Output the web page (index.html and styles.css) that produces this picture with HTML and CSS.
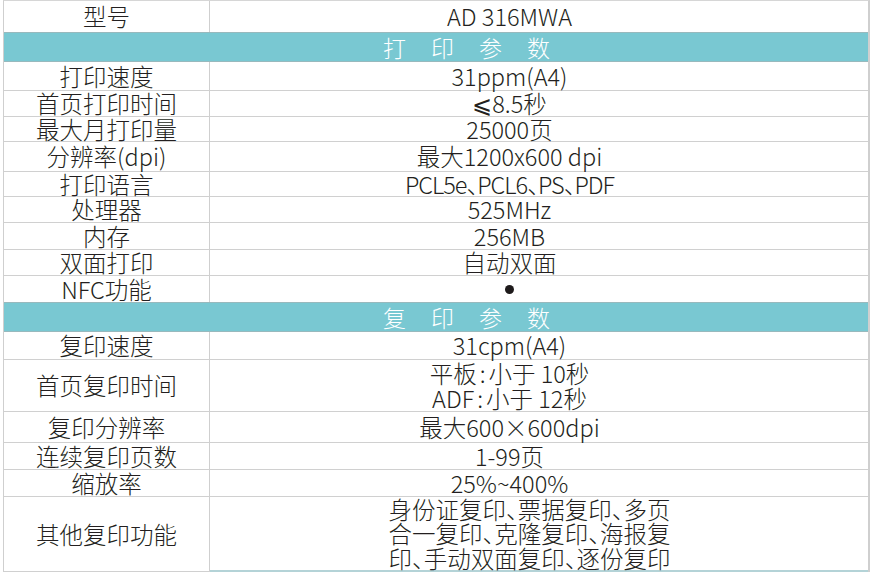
FILE: index.html
```html
<!DOCTYPE html>
<html lang="zh-CN">
<head>
<meta charset="utf-8">
<title>AD 316MWA 参数</title>
<link rel="stylesheet" href="styles.css">
</head>
<body>
<div class="spec">
  <div class="k">型号</div><div class="v">AD 316MWA</div>
  <div class="sec">打印参数</div>
  <div class="k">打印速度</div><div class="v">31ppm(A4)</div>
  <div class="k">首页打印时间</div><div class="v">⩽8.5秒</div>
  <div class="k">最大月打印量</div><div class="v">25000页</div>
  <div class="k">分辨率(dpi)</div><div class="v">最大1200x600 dpi</div>
  <div class="k">打印语言</div><div class="v tight">PCL5e、PCL6、PS、PDF</div>
  <div class="k">处理器</div><div class="v">525MHz</div>
  <div class="k">内存</div><div class="v">256MB</div>
  <div class="k">双面打印</div><div class="v">自动双面</div>
  <div class="k">NFC功能</div><div class="v"><span class="dot"></span></div>
  <div class="sec">复印参数</div>
  <div class="k">复印速度</div><div class="v">31cpm(A4)</div>
  <div class="k">首页复印时间</div><div class="v"><p class="lines">平板<span class="colon">:</span>小于 10秒<br>ADF<span class="colon">:</span>小于 12秒</p></div>
  <div class="k">复印分辨率</div><div class="v">最大600×600dpi</div>
  <div class="k">连续复印页数</div><div class="v">1-99页</div>
  <div class="k">缩放率</div><div class="v">25%~400%</div>
  <div class="k">其他复印功能</div><div class="v wide"><p class="lines">身份证复印、票据复印、多页<br>合一复印、克隆复印、海报复<br>印、手动双面复印、逐份复印</p></div>
</div>
</body>
</html>
```

FILE: styles.css
```css
html, body {
  margin: 0;
  padding: 0;
  background: #ffffff;
}

body {
  padding: 1px 0 0 3px;
  font-family: "Noto Sans CJK SC", "Noto Sans", sans-serif;
  font-weight: 300;
  color: #231f20;
}

.spec {
  width: 867px;
  display: grid;
  grid-template-columns: 206px 1fr;
  grid-template-rows: 32px 29px 29px 26px 25px 30px 25px 26px 27px 26px 27px 29px 28px 52px 31px 27px 27px 75px;
  border-top: 1px solid #d6d6d6;
  border-left: 1px solid #cfcfcf;
  border-right: 2px solid #cfcfcf;
  box-sizing: border-box;
  margin-top: -1px;
}

.k, .v {
  box-sizing: border-box;
  display: flex;
  align-items: center;
  justify-content: center;
  text-align: center;
  font-size: 23.5px;
  line-height: 24.5px;
  border-bottom: 1px solid #d0d0d0;
  white-space: nowrap;
  font-feature-settings: "halt" 1;
}

.k {
  border-right: 1px solid #cfcfcf;
}

.v {
  padding-right: 59px;
}

.v.wide {
  padding-right: 19px;
}

.lines {
  margin: 0;
  text-align: center;
}

.tight {
  letter-spacing: -1px;
}

.colon {
  margin: 0 3px;
}

.sec {
  grid-column: 1 / -1;
  box-sizing: border-box;
  display: flex;
  align-items: center;
  background: #79c8d2;
  color: #ffffff;
  font-size: 23px;
  letter-spacing: 25px;
  padding-left: 379px;
  border-top: 1px solid #98b9bd;
  border-bottom: 1px solid #98b9bd;
  margin-top: -1px;
}

.spec > .k:last-of-type,
.spec > .v:last-child {
  border-bottom: 2px solid #b4d3d7;
}

.dot {
  display: inline-block;
  width: 9px;
  height: 9px;
  border-radius: 50%;
  background: #1e1a1b;
}
```
